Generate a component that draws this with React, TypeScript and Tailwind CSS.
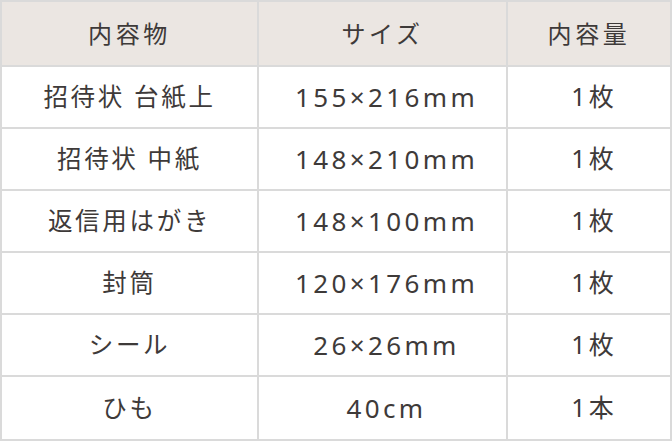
const rows = [
  { name: "招待状 台紙上", size: "155×216mm", qty: "1枚" },
  { name: "招待状 中紙", size: "148×210mm", qty: "1枚" },
  { name: "返信用はがき", size: "148×100mm", qty: "1枚" },
  { name: "封筒", size: "120×176mm", qty: "1枚" },
  { name: "シール", size: "26×26mm", qty: "1枚" },
  { name: "ひも", size: "40cm", qty: "1本" },
];

export default function App() {
  return (
    <div className="w-[672px] bg-white font-['Noto_Sans','Noto_Sans_CJK_JP',sans-serif] font-normal text-[#3e3a39]">
      <div className="border-2 border-[#dadada]">
        {/* header */}
        <div className="grid h-[65px] grid-cols-[255px_249px_1fr] border-b-2 border-[#dadada] bg-[#ebe6e2] text-[24px] tracking-[0.15em]">
          <div className="flex items-center justify-center">内容物</div>
          <div className="flex items-center justify-center border-l-2 border-[#dadada]">サイズ</div>
          <div className="flex items-center justify-center border-l-2 border-[#dadada]">内容量</div>
        </div>

        {rows.map((r, i) => (
          <div
            key={r.name}
            className={
              i < rows.length - 1
                ? "grid h-[62px] grid-cols-[255px_249px_1fr] border-b-2 border-[#dadada]"
                : "grid h-[62px] grid-cols-[255px_249px_1fr]"
            }
          >
            <div className="flex items-center justify-center text-[24.5px] tracking-[0.11em]">{r.name}</div>
            <div className="flex items-center justify-center border-l-2 border-[#dadada] pl-[8px] text-[26px] tracking-[0.13em]">
              {r.size}
            </div>
            <div className="flex items-center justify-center border-l-2 border-[#dadada] pl-[10px] text-[25px] tracking-[0.12em]">
              {r.qty}
            </div>
          </div>
        ))}
      </div>
    </div>
  );
}
